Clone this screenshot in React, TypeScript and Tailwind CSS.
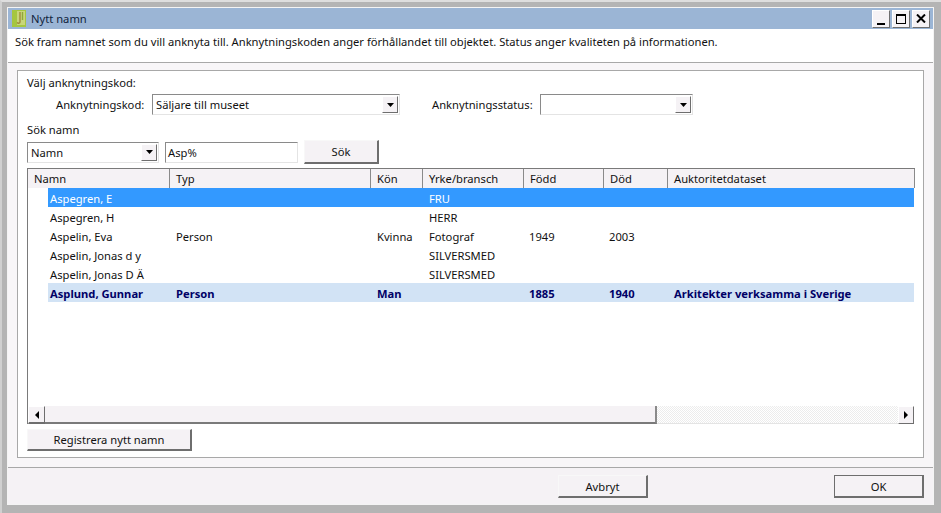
function Arrow({ dir = "down" }: { dir?: "down" | "left" | "right" }) {
  const points = dir === "down" ? "0,0 7,0 3.5,4" : dir === "left" ? "4,0 4,8 0,4" : "0,0 0,8 4,4";
  return (
    <svg width={dir === "down" ? 7 : 4} height={dir === "down" ? 4 : 8} className="block">
      <polygon points={points} fill="#000" />
    </svg>
  );
}
function RaisedBox({ className, children }: { className: string; children?: React.ReactNode }) {
  return (
    <div className={`flex items-center justify-center bg-[#f5f2f5] border border-t-[#ffffff] border-l-[#ffffff] border-r-[#6e6e6e] border-b-[#6e6e6e] ${className}`}>
      {children}
    </div>
  );
}
function Combo({ w, text }: { w: string; text: string }) {
  return (
    <div className={`flex h-[21px] items-center justify-between bg-white border border-t-[#8a8a8a] border-l-[#8a8a8a] border-r-[#e4e4e4] border-b-[#e4e4e4] pl-[3px] pr-px ${w}`}>
      <span>{text}</span>
      <RaisedBox className="h-[17px] w-[16px]"><Arrow /></RaisedBox>
    </div>
  );
}
function Btn({ w, h, text, strong }: { w: string; h: string; text: string; strong?: boolean }) {
  return (
    <div className={`flex items-center justify-center bg-[#f5f2f5] border ${strong ? "border-[#6e6e6e] border-r-2 border-b-2" : "border-t-[#f8f8f8] border-l-[#f8f8f8] border-r-[#6e6e6e] border-b-[#6e6e6e] border-r-2 border-b-2"} ${w} ${h}`}>
      {text}
    </div>
  );
}
const cols = [
  { label: "Namn", w: "w-[142px]" },
  { label: "Typ", w: "w-[201px]" },
  { label: "Kön", w: "w-[52px]" },
  { label: "Yrke/bransch", w: "w-[101px]" },
  { label: "Född", w: "w-[80px]" },
  { label: "Död", w: "w-[64px]" },
  { label: "Auktoritetdataset", w: "flex-1" },
];
const rows = [
  { c: ["Aspegren, E", "", "", "FRU", "", "", ""], k: "sel" },
  { c: ["Aspegren, H", "", "", "HERR", "", "", ""], k: "" },
  { c: ["Aspelin, Eva", "Person", "Kvinna", "Fotograf", "1949", "2003", ""], k: "" },
  { c: ["Aspelin, Jonas d y", "", "", "SILVERSMED", "", "", ""], k: "" },
  { c: ["Aspelin, Jonas D Ä", "", "", "SILVERSMED", "", "", ""], k: "" },
  { c: ["Asplund, Gunnar", "Person", "Man", "", "1885", "1940", "Arkitekter verksamma i Sverige"], k: "bold" },
];
const bodyCols = ["w-[126px]", "w-[201px]", "w-[52px]", "w-[100px]", "w-[80px]", "w-[65px]", "flex-1"];
export default function App() {
  return (
    <div className="h-[513px] w-[941px] overflow-hidden border-l-2 border-t-2 border-l-[#d0d0d0] border-t-[#dedede] bg-[#b4b4b4] text-[11.2px] leading-[13px] text-[#111] font-['Noto_Sans','Liberation_Sans',sans-serif]">
      <div className="h-[511px] pb-[8px] pl-[5px] pr-[7px] pt-[5px]">
        <div className="flex h-[498px] flex-col border border-[#f4f4f4] bg-white">
          <div className="flex h-[21px] shrink-0 items-center justify-between bg-[#9bb5d5] pr-[3px]">
            <div className="flex items-center gap-[4px] pl-[4px]">
              <svg width="15" height="17" viewBox="0 0 15 17">
                <rect x="0" y="0" width="14" height="17" fill="#a5c640" />
                <rect x="5" y="1" width="8" height="14" fill="#c8d67a" />
                <path d="M8 2v10c0 1.5-2 1.5-3 .5" stroke="#a08a3c" strokeWidth="1.4" fill="none" />
                <path d="M10.5 2v8" stroke="#8fa63a" strokeWidth="1.4" fill="none" />
              </svg>
              <span className="text-[#10233c]">Nytt namn</span>
            </div>
            <div className="flex gap-[2px]">
              <RaisedBox className="h-[18px] w-[18px] !items-end pb-[2px]"><div className="h-[2px] w-[8px] bg-black" /></RaisedBox>
              <RaisedBox className="h-[18px] w-[18px]"><div className="h-[10px] w-[10px] border border-t-2 border-black" /></RaisedBox>
              <RaisedBox className="h-[18px] w-[18px]">
                <svg width="10" height="9" viewBox="0 0 10 9"><path d="M1 0.5l8 8M9 0.5l-8 8" stroke="#000" strokeWidth="2" /></svg>
              </RaisedBox>
            </div>
          </div>
          <div className="h-[34px] shrink-0 border-b border-[#a8a8a8] bg-white pl-[7px] pt-[6px]">
            Sök fram namnet som du vill anknyta till. Anknytningskoden anger förhållandet till objektet. Status anger kvaliteten på informationen.
          </div>
          <div className="shrink-0 bg-[#f8f6f8] pb-[9px] pl-[9px] pr-[9px] pt-[7px]">
            <div className="flex h-[388px] flex-col border border-[#a8a8a8] bg-white pl-[9px] pr-[8px]">
              <div className="pt-[5px]">Välj anknytningskod:</div>
              <div className="mt-[5px] flex items-center">
                <span className="ml-[29px] w-[96px]">Anknytningskod:</span>
                <Combo w="w-[248px]" text="Säljare till museet" />
                <span className="ml-[32px] w-[108px]">Anknytningsstatus:</span>
                <Combo w="w-[153px]" text="" />
              </div>
              <div className="mt-[8px]">Sök namn</div>
              <div className="mt-[4px] flex items-center">
                <Combo w="w-[132px]" text="Namn" />
                <div className="ml-[6px] flex h-[21px] w-[133px] items-center border border-t-[#8a8a8a] border-l-[#8a8a8a] border-r-[#e4e4e4] border-b-[#e4e4e4] bg-white pl-[2px]">Asp%</div>
                <Btn w="ml-[6px] w-[75px]" h="h-[24px]" text="Sök" />
              </div>
              <div className="mt-[4px] flex h-[256px] flex-col border-l border-t border-[#7a7a7a]">
                <div className="flex h-[19px] shrink-0 bg-[#f5f2f5]">
                  {cols.map((c) => (
                    <div key={c.label} className={`flex h-full items-center border-r border-r-[#8a8a8a] pl-[6px] ${c.w}`}>{c.label}</div>
                  ))}
                </div>
                <div className="min-h-0 flex-1 pl-[20px] pr-px">
                  {rows.map((r) => (
                    <div key={r.c[0]} className={`flex h-[19px] items-center pl-[2px] pt-px ${r.k === "sel" ? "bg-[#3399ff] text-white" : r.k === "bold" ? "bg-[#d2e3f5] font-bold text-[#000066]" : ""}`}>
                      {r.c.map((t, i) => (
                        <div key={i} className={`shrink-0 whitespace-nowrap ${bodyCols[i]}`}>{t}</div>
                      ))}
                    </div>
                  ))}
                </div>
                <div className="flex h-[18px] shrink-0 pr-px">
                  <RaisedBox className="w-[17px] border-b-2"><Arrow dir="left" /></RaisedBox>
                  <div className="w-[612px] border-b-2 border-r-2 border-b-[#7a7a7a] border-r-[#8a8a8a] bg-[#f5f2f5]" />
                  <div className="flex-1 border-b border-b-[#e4e4e4] bg-[repeating-conic-gradient(#ececec_0_25%,#ffffff_0_50%)] bg-[length:2px_2px]" />
                  <RaisedBox className="w-[16px]"><Arrow dir="right" /></RaisedBox>
                </div>
              </div>
              <div className="mt-[5px]">
                <Btn w="w-[165px]" h="h-[22px]" text="Registrera nytt namn" />
              </div>
            </div>
          </div>
          <div className="flex min-h-0 flex-1 items-start justify-end border-t border-[#a8a8a8] bg-[#f5f2f5] pr-[9px] pt-[7px]">
            <Btn w="w-[90px]" h="h-[23px]" text="Avbryt" />
            <div className="w-[186px]" />
            <Btn w="w-[90px]" h="h-[23px]" text="OK" strong />
          </div>
        </div>
      </div>
    </div>
  );
}
